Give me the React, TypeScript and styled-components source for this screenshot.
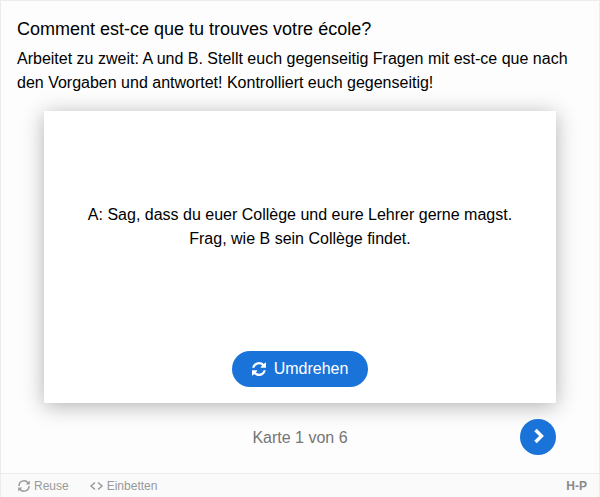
import React from 'react';
import styled, { createGlobalStyle } from 'styled-components';

const GlobalStyle = createGlobalStyle`
  *, *::before, *::after { box-sizing: border-box; }
  body {
    margin: 0;
    background: #fdfdfd;
    color: #000;
    font-family: "Liberation Sans", Arial, sans-serif;
    font-size: 16px;
    line-height: 24px;
  }
`;

const Frame = styled.div`
  display: flex;
  flex-direction: column;
  min-height: 100vh;
  border: 1px solid #ececec;
  border-bottom: 0;
`;

const Content = styled.main`
  display: flex;
  flex: 1;
  flex-direction: column;
  padding: 16px;
`;

const Title = styled.h1`
  margin: 0 0 6px;
  font-size: 18px;
  font-weight: 400;
  line-height: 24px;
`;

const Description = styled.p`
  margin: 0;
`;

const Deck = styled.section`
  margin: 16px 27px 0;
`;

const Card = styled.article`
  display: flex;
  flex-direction: column;
  min-height: 292px;
  padding: 16px;
  background: #fff;
  box-shadow: 0 3px 20px rgba(0, 0, 0, 0.3);
`;

const CardText = styled.p`
  display: flex;
  flex: 1;
  align-items: center;
  justify-content: center;
  margin: 0;
  padding: 0 16px 24px;
  text-align: center;
`;

const FlipButton = styled.button`
  display: flex;
  align-items: center;
  align-self: center;
  gap: 8px;
  height: 36px;
  padding: 0 20px;
  border: 0;
  border-radius: 18px;
  background: #1a73d9;
  color: #fff;
  font: inherit;
  cursor: pointer;
`;

const Navigation = styled.nav`
  display: grid;
  grid-template-columns: 36px 1fr 36px;
  align-items: center;
  margin-top: 16px;
`;

const Progress = styled.div`
  grid-column: 2;
  padding-top: 2px;
  color: #757575;
  text-align: center;
`;

const NextButton = styled.button`
  display: flex;
  align-items: center;
  justify-content: center;
  width: 36px;
  height: 36px;
  padding: 0;
  border: 0;
  border-radius: 50%;
  background: #1a73d9;
  color: #fff;
  cursor: pointer;
`;

const Footer = styled.footer`
  display: flex;
  align-items: center;
  gap: 20px;
  height: 24px;
  padding: 0 12px 0 16px;
  border-top: 1px solid #ececec;
  background: #fafafa;
  color: #999;
`;

const FooterButton = styled.button`
  display: flex;
  align-items: center;
  gap: 3px;
  padding: 0;
  border: 0;
  background: none;
  color: inherit;
  font: inherit;
  font-size: 12px;
  line-height: 16px;
  cursor: pointer;
`;

const LogoLink = styled.a`
  margin-left: auto;
  color: #8a8a8a;
  font-size: 12px;
  font-weight: 700;
  line-height: 16px;
  text-decoration: none;
`;

const RefreshIcon = ({ size }: { size: number }) => (
  <svg width={size} height={size} viewBox="0 0 1536 1536" fill="currentColor" aria-hidden="true">
    <path d="M1511 928q0 5-1 7-64 268-268 434.500t-478 166.500q-146 0-282.500-55t-243.500-157l-129 129q-19 19-45 19t-45-19-19-45v-448q0-26 19-45t45-19h448q26 0 45 19t19 45-19 45l-137 137q71 66 161 102t187 36q134 0 250-65t186-179q11-17 53-117 8-23 30-23h192q13 0 22.500 9.500t9.500 22.500zm25-800v448q0 26-19 45t-45 19h-448q-26 0-45-19t-19-45 19-45l138-138q-148-137-349-137-134 0-250 65t-186 179q-11 17-53 117-8 23-30 23h-199q-13 0-22.500-9.500t-9.500-22.500v-7q65-268 270-434.500t480-166.500q146 0 284 55.500t245 156.500l130-129q19-19 45-19t45 19 19 45z" />
  </svg>
);

const ReuseIcon = () => (
  <svg width="14" height="14" viewBox="0 0 14 14" fill="none" stroke="currentColor" strokeWidth="1.5" aria-hidden="true">
    <path d="M2 7A5 5 0 0 1 11 3.800M12 7A5 5 0 0 1 3 10.200" />
    <path d="M12.800 1.500v4H8.800zM1.200 12.500V8.500h4z" fill="currentColor" stroke="none" />
  </svg>
);

const ChevronIcon = () => (
  <svg width="16" height="18" viewBox="0 0 16 18" fill="none" stroke="currentColor" strokeWidth="3.400" aria-hidden="true">
    <path d="M5.500 2l6 6-6 6" />
  </svg>
);

const EmbedIcon = () => (
  <svg width="15" height="14" viewBox="0 0 15 14" fill="none" stroke="currentColor" strokeWidth="1.500" aria-hidden="true">
    <path d="M6 3.500L2 7l4 3.500M9 3.500L13 7l-4 3.500" />
  </svg>
);

export default function App() {
  return (
    <>
      <GlobalStyle />
      <Frame>
        <Content>
          <Title>Comment est-ce que tu trouves votre école?</Title>
          <Description>
            Arbeitet zu zweit: A und B. Stellt euch gegenseitig Fragen mit est-ce que nach den
            Vorgaben und antwortet! Kontrolliert euch gegenseitig!
          </Description>
          <Deck>
            <Card>
              <CardText>
                A: Sag, dass du euer Collège und eure Lehrer gerne magst. Frag, wie B sein Collège
                findet.
              </CardText>
              <FlipButton type="button">
                <RefreshIcon size={14} />
                Umdrehen
              </FlipButton>
            </Card>
            <Navigation>
              <Progress>Karte 1 von 6</Progress>
              <NextButton type="button" aria-label="Nächste Karte">
                <ChevronIcon />
              </NextButton>
            </Navigation>
          </Deck>
        </Content>
        <Footer>
          <FooterButton type="button">
            <ReuseIcon />
            Reuse
          </FooterButton>
          <FooterButton type="button">
            <EmbedIcon />
            Einbetten
          </FooterButton>
          <LogoLink href="https://h5p.org">H-P</LogoLink>
        </Footer>
      </Frame>
    </>
  );
}
